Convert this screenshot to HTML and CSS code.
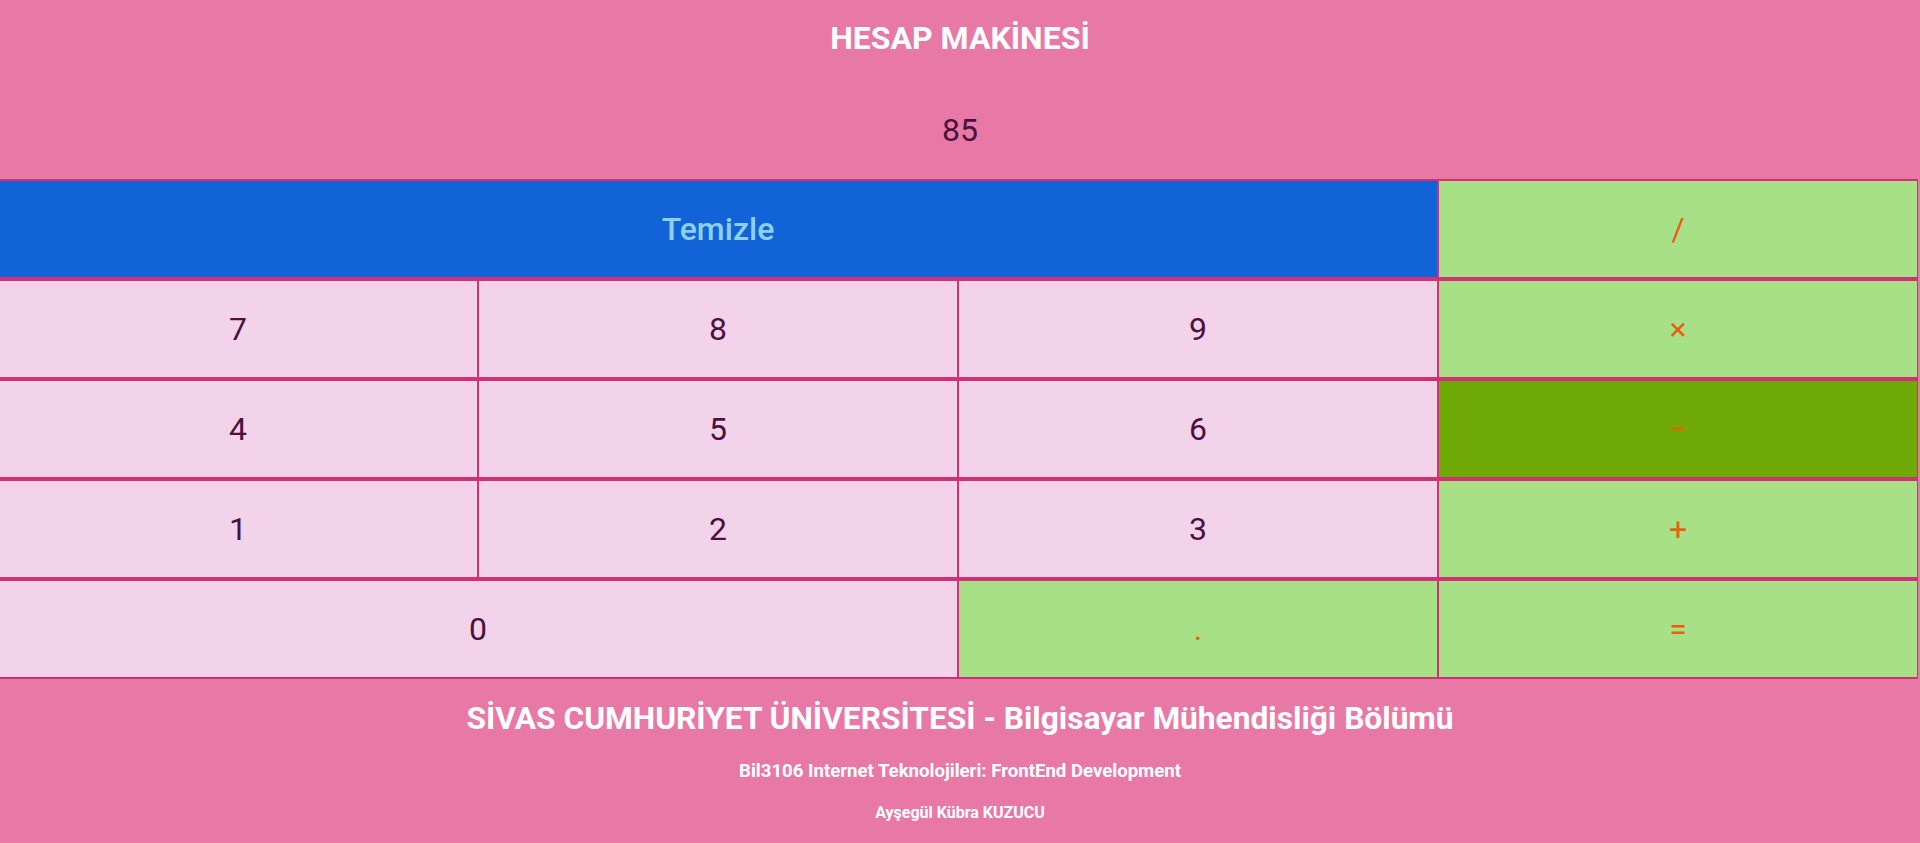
FILE: index.html
```html
<!DOCTYPE html>
<html lang="tr">
<head>
<meta charset="utf-8">
<title>Hesap Makinesi</title>
<link rel="stylesheet" href="styles.css">
</head>
<body>
<div class="app">
  <header class="head">
    <h1 class="title">HESAP MAKİNESİ</h1>
    <div class="display">85</div>
  </header>
  <div class="keys">
    <button class="key clear wide3">Temizle</button>
    <button class="key op">/</button>
    <button class="key num">7</button>
    <button class="key num">8</button>
    <button class="key num">9</button>
    <button class="key op">×</button>
    <button class="key num">4</button>
    <button class="key num">5</button>
    <button class="key num">6</button>
    <button class="key op active">−</button>
    <button class="key num">1</button>
    <button class="key num">2</button>
    <button class="key num">3</button>
    <button class="key op">+</button>
    <button class="key num wide2">0</button>
    <button class="key op">.</button>
    <button class="key op">=</button>
  </div>
  <footer class="foot">
    <h2 class="uni">SİVAS CUMHURİYET ÜNİVERSİTESİ - Bilgisayar Mühendisliği Bölümü</h2>
    <h3 class="course">Bil3106 Internet Teknolojileri: FrontEnd Development</h3>
    <h4 class="author">Ayşegül Kübra KUZUCU</h4>
  </footer>
</div>
</body>
</html>
```
FILE: styles.css
```css
html, body {
  margin: 0;
  padding: 0;
}
body {
  background: #e879a7;
  font-family: Roboto, "Noto Sans", Arial, sans-serif;
  overflow: hidden;
}
.app {
  display: flex;
  flex-direction: column;
  width: 1920px;
  height: 843px;
}
.head {
  height: 179px;
  display: flex;
  flex-direction: column;
  align-items: center;
  box-sizing: border-box;
  padding-top: 19px;
}
.title {
  margin: 0;
  font-size: 32px;
  line-height: 38px;
  font-weight: 700;
  color: #ffffff;
}
.display {
  margin-top: 54px;
  font-size: 32px;
  line-height: 38px;
  color: #4b1040;
}
.keys {
  display: grid;
  grid-template-columns: repeat(4, 480px);
  grid-auto-rows: 100px;
  margin-left: -2px;
  width: 1920px;
}
.key {
  box-sizing: border-box;
  border-style: solid;
  border-color: #d23075;
  border-width: 2px 1px;
  margin: 0;
  padding: 0;
  font-family: Roboto, "Noto Sans", Arial, sans-serif;
  font-size: 32px;
  display: flex;
  align-items: center;
  justify-content: center;
  cursor: pointer;
}
.num {
  background: #f2d3e9;
  color: #4b1040;
}
.op {
  background: #a8e088;
  color: #e8600f;
}
.op.active {
  background: #6faa07;
}
.clear {
  background: #1363d8;
  color: #8dd0ec;
  font-weight: 500;
}
.wide3 {
  grid-column: span 3;
}
.wide2 {
  grid-column: span 2;
}
.foot {
  display: flex;
  flex-direction: column;
  align-items: center;
  color: #ffffff;
  padding-top: 21px;
}
.uni {
  margin: 0;
  font-size: 31.7px;
  line-height: 38px;
  font-weight: 700;
}
.course {
  margin: 22px 0 0;
  font-size: 18.6px;
  line-height: 22px;
  font-weight: 700;
}
.author {
  margin: 21px 0 0;
  font-size: 16px;
  line-height: 19px;
  font-weight: 700;
}
```
